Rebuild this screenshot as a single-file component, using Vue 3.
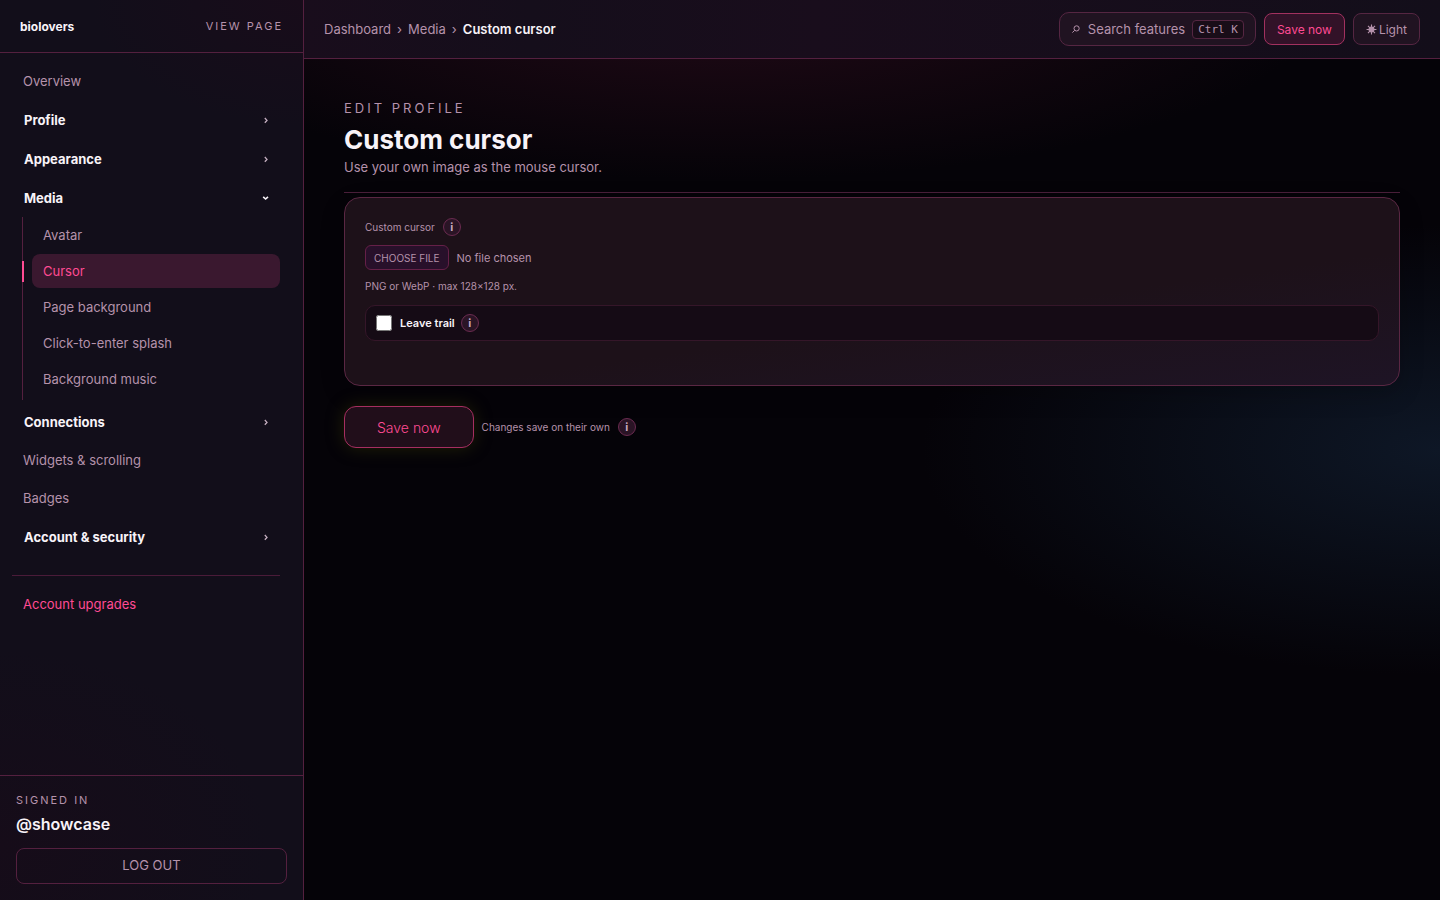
<template>
  <div class="dashboard">
    <aside class="sidebar">
      <header class="brand">
        <a class="logo" href="#">biolovers</a>
        <a class="view-page" href="#">View page</a>
      </header>

      <nav class="nav">
        <template v-for="item in navItems" :key="item.label">
          <div v-if="item.group" class="nav-group">
            <button
              type="button"
              class="nav-toggle"
              :class="{ open: openGroup === item.label }"
              :aria-expanded="openGroup === item.label"
              @click="toggleGroup(item.label)"
            >
              {{ item.label }}
              <svg class="chevron" viewBox="0 0 8 8" aria-hidden="true">
                <path d="M2.8 2 5 4.4 2.8 6.8" />
              </svg>
            </button>
            <div v-if="openGroup === item.label && item.children" class="nav-children">
              <a
                v-for="child in item.children"
                :key="child"
                href="#"
                class="nav-child"
                :class="{ active: child === 'Cursor' }"
              >{{ child }}</a>
            </div>
          </div>
          <a v-else href="#" class="nav-link">{{ item.label }}</a>
        </template>
        <div class="nav-extra">
          <a href="#" class="nav-link upgrade">Account upgrades</a>
        </div>
      </nav>

      <footer class="account">
        <span class="account-label">Signed in</span>
        <strong class="account-name">@showcase</strong>
        <button type="button" class="logout">Log out</button>
      </footer>
    </aside>

    <div class="content">
      <header class="topbar">
        <nav class="crumbs">
          <a href="#">Dashboard</a>
          <span>›</span>
          <a href="#">Media</a>
          <span>›</span>
          <strong>Custom cursor</strong>
        </nav>
        <div class="tools">
          <button type="button" class="search">
            <svg class="search-icon" viewBox="0 0 10 10" aria-hidden="true">
              <circle cx="5.6" cy="4.4" r="2.6" />
              <path d="M3.7 6.3 1.4 8.6" />
            </svg>
            <span>Search features</span>
            <kbd>Ctrl K</kbd>
          </button>
          <button type="button" class="tool save">Save now</button>
          <button type="button" class="tool">
            <svg class="sun" viewBox="0 0 10 10" aria-hidden="true">
              <circle cx="5" cy="5" r="2.2" />
              <path d="M5 .5v9M.5 5h9M1.8 1.8l6.4 6.4M8.2 1.8 1.8 8.2" />
            </svg>
            Light
          </button>
        </div>
      </header>

      <main class="page">
        <header class="page-head">
          <p class="eyebrow">Edit profile</p>
          <h1>Custom cursor</h1>
          <p class="lead">Use your own image as the mouse cursor.</p>
        </header>

        <section class="card">
          <div class="field-head">
            <label for="cursor-file">Custom cursor</label>
            <button type="button" class="info" aria-label="About custom cursor">i</button>
          </div>
          <input id="cursor-file" class="file" type="file" accept="image/png,image/webp" />
          <p class="hint">PNG or WebP · max 128×128 px.</p>
          <div class="option">
            <input id="leave-trail" v-model="leaveTrail" type="checkbox" />
            <label for="leave-trail">Leave trail</label>
            <button type="button" class="info" aria-label="About leave trail">i</button>
          </div>
        </section>

        <div class="actions">
          <button type="button" class="save-main">Save now</button>
          <span>Changes save on their own</span>
          <button type="button" class="info" aria-label="About saving">i</button>
        </div>
      </main>
    </div>
  </div>
</template>

<script setup>
import { ref } from 'vue';

const navItems = [
  { label: 'Overview' },
  { label: 'Profile', group: true },
  { label: 'Appearance', group: true },
  {
    label: 'Media',
    group: true,
    children: ['Avatar', 'Cursor', 'Page background', 'Click-to-enter splash', 'Background music']
  },
  { label: 'Connections', group: true },
  { label: 'Widgets & scrolling' },
  { label: 'Badges' },
  { label: 'Account & security', group: true }
];

const openGroup = ref('Media');
const leaveTrail = ref(false);

const toggleGroup = (label) => {
  openGroup.value = openGroup.value === label ? '' : label;
};
</script>

<style>
body {
  margin: 0;
  background: #050308;
}
</style>

<style scoped>
.dashboard {
  --text: #f8f3f8;
  --muted: #b592ab;
  --line: #54203f;
  --accent: #ff4b93;
  display: grid;
  grid-template-columns: 304px minmax(0, 1fr);
  min-height: 100vh;
  background:
    radial-gradient(ellipse 36% 25% at 100% 50%, #0e1726 0%, rgba(14, 23, 38, 0) 100%),
    radial-gradient(ellipse 42% 20% at 50% 0%, #220a17 0%, rgba(34, 10, 23, 0) 100%),
    #050308;
  color: var(--text);
  font-family: Inter, "Noto Sans", sans-serif;
  font-size: 13px;
}

.dashboard * {
  box-sizing: border-box;
}

a {
  color: inherit;
  text-decoration: none;
}

button {
  font: inherit;
  color: inherit;
  cursor: pointer;
}

p,
h1 {
  margin: 0;
}

.sidebar {
  display: flex;
  flex-direction: column;
  border-right: 1px solid var(--line);
  background:
    radial-gradient(ellipse 90% 22% at 0% 94%, #160c19 0%, rgba(22, 12, 25, 0) 100%),
    radial-gradient(ellipse 70% 14% at 100% 0%, #180c1a 0%, rgba(24, 12, 26, 0) 100%),
    #120e1a;
}

.brand {
  display: flex;
  align-items: center;
  justify-content: space-between;
  height: 53px;
  padding: 0 20px;
  border-bottom: 1px solid var(--line);
}

.logo {
  font-size: 12px;
  font-weight: 700;
}

.view-page {
  color: var(--muted);
  font-size: 11px;
  letter-spacing: 2px;
  text-transform: uppercase;
}

.nav {
  display: flex;
  flex: 1;
  flex-direction: column;
  gap: 2px;
  padding: 10px 23px 10px 12px;
}

.nav-link,
.nav-child {
  display: flex;
  align-items: center;
  padding: 0 11px;
  color: var(--muted);
}

.nav-link {
  height: 36px;
}

.nav-toggle {
  display: flex;
  align-items: center;
  justify-content: space-between;
  width: 100%;
  height: 37px;
  padding: 0 10px 0 12px;
  border: 0;
  background: none;
  font-weight: 700;
}

.chevron {
  width: 8px;
  height: 8px;
  fill: none;
  stroke: #c5afc0;
  stroke-width: 1.3;
}

.open .chevron {
  stroke: var(--text);
  stroke-width: 1.6;
  transform: rotate(90deg);
}

.nav-children {
  display: flex;
  flex-direction: column;
  gap: 2px;
  margin: 1px 0 1px 10px;
  padding: 1px 0 4px 9px;
  border-left: 1px solid var(--line);
}

.nav-child {
  position: relative;
  height: 34px;
  border-radius: 8px;
}

.nav-child.active {
  background: #3a182f;
  color: var(--accent);
}

.nav-child.active::before {
  content: "";
  position: absolute;
  top: 7px;
  left: -10px;
  width: 2px;
  height: 21px;
  background: var(--accent);
}

.nav-extra {
  margin-top: 18px;
  padding-top: 10px;
  border-top: 1px solid #4a1b39;
}

.upgrade {
  color: var(--accent);
}

.account {
  display: flex;
  flex-direction: column;
  padding: 16px;
  border-top: 1px solid var(--line);
}

.account-label {
  color: var(--muted);
  font-size: 11px;
  line-height: 16px;
  letter-spacing: 2px;
  text-transform: uppercase;
}

.account-name {
  margin: 4px 0 12px;
  font-size: 16px;
  font-weight: 600;
  line-height: 24px;
}

.logout {
  height: 36px;
  padding: 0 12px 2px;
  border: 1px solid var(--line);
  border-radius: 8px;
  background: none;
  color: var(--muted);
  font-size: 13px;
  text-transform: uppercase;
}

.topbar {
  display: flex;
  align-items: center;
  justify-content: space-between;
  height: 59px;
  padding: 0 20px;
  border-bottom: 1px solid var(--line);
  background: linear-gradient(90deg, #190d1c 0%, #150e1b 20%, #190d1c 45%, #130e1a 100%);
}

.crumbs {
  display: flex;
  gap: 6px;
  color: var(--muted);
}

.crumbs strong {
  color: var(--text);
  font-weight: 600;
}

.tools {
  display: flex;
  align-items: center;
  gap: 8px;
}

.search,
.tool {
  display: flex;
  align-items: center;
  border: 1px solid #552642;
  background: #201321;
  color: var(--muted);
}

.search {
  gap: 7px;
  height: 34px;
  padding: 0 11px;
  border-radius: 10px;
}

.search-icon {
  width: 10px;
  height: 10px;
  fill: none;
  stroke: currentColor;
}

kbd {
  padding: 2px 5px;
  border: 1px solid #552642;
  border-radius: 4px;
  background: #190d18;
  font-family: "DejaVu Sans Mono", monospace;
  font-size: 11px;
  line-height: 13px;
}

.tool {
  gap: 2px;
  height: 32px;
  padding: 0 12px;
  border-radius: 8px;
  font-size: 12px;
}

.tool.save {
  border-color: #a2315f;
  background: #321228;
  color: var(--accent);
}

.sun {
  width: 11px;
  height: 11px;
  fill: currentColor;
  stroke: currentColor;
}

.page {
  padding: 40px;
}

.page-head {
  margin-bottom: 4px;
  padding-bottom: 16px;
  border-bottom: 1px solid #4a1f3a;
}

.eyebrow {
  color: var(--muted);
  font-size: 13px;
  line-height: 18px;
  letter-spacing: 3px;
  text-transform: uppercase;
}

h1 {
  margin: 7px 0 2px;
  font-size: 26px;
  font-weight: 700;
  line-height: 32px;
}

.lead {
  color: var(--muted);
  line-height: 18px;
}

.card {
  padding: 20px 20px 44px;
  border: 1px solid #5a2743;
  border-radius: 16px;
  background: linear-gradient(172deg, #1d1119 0%, #1d1119 60%, #1e1425 100%);
  box-shadow: 0 8px 24px rgba(0, 0, 0, 0.2);
}

.field-head {
  display: flex;
  align-items: center;
  gap: 8px;
  color: var(--muted);
  font-size: 10px;
}

.info {
  display: grid;
  place-items: center;
  width: 18px;
  height: 18px;
  padding: 0;
  border: 1px solid #6b2b50;
  border-radius: 50%;
  background: #2a1425;
  color: #c9a9bf;
  font-size: 11px;
  font-weight: 700;
  line-height: 16px;
}

.file {
  display: block;
  width: 100%;
  margin: 9px 0;
  color: var(--muted);
  font-family: inherit;
  font-size: 11px;
}

.file::file-selector-button {
  height: 25px;
  margin: 0 8px 0 0;
  padding: 0 8px;
  border: 1px solid #652048;
  border-radius: 6px;
  background: #28102a;
  color: var(--muted);
  font-family: inherit;
  font-size: 10px;
  text-transform: uppercase;
}

.hint {
  margin-bottom: 12px;
  color: var(--muted);
  font-size: 10px;
  line-height: 14px;
}

.option {
  display: flex;
  align-items: center;
  height: 36px;
  padding: 0 10px;
  border: 1px solid #351629;
  border-radius: 10px;
  background: #150b15;
  font-size: 11px;
  font-weight: 600;
}

.option input {
  width: 16px;
  height: 16px;
  margin: 0 8px 0 0;
}

.option .info {
  margin-left: 6px;
}

.actions {
  display: flex;
  align-items: center;
  gap: 8px;
  margin-top: 20px;
  color: var(--muted);
  font-size: 10px;
}

.save-main {
  height: 42px;
  padding: 0 32px;
  border: 1px solid #a62e60;
  border-radius: 12px;
  background: #210e1a;
  box-shadow: 0 0 18px rgba(80, 85, 0, 0.35);
  color: var(--accent);
  font-size: 14px;
  font-weight: 300;
}
</style>
